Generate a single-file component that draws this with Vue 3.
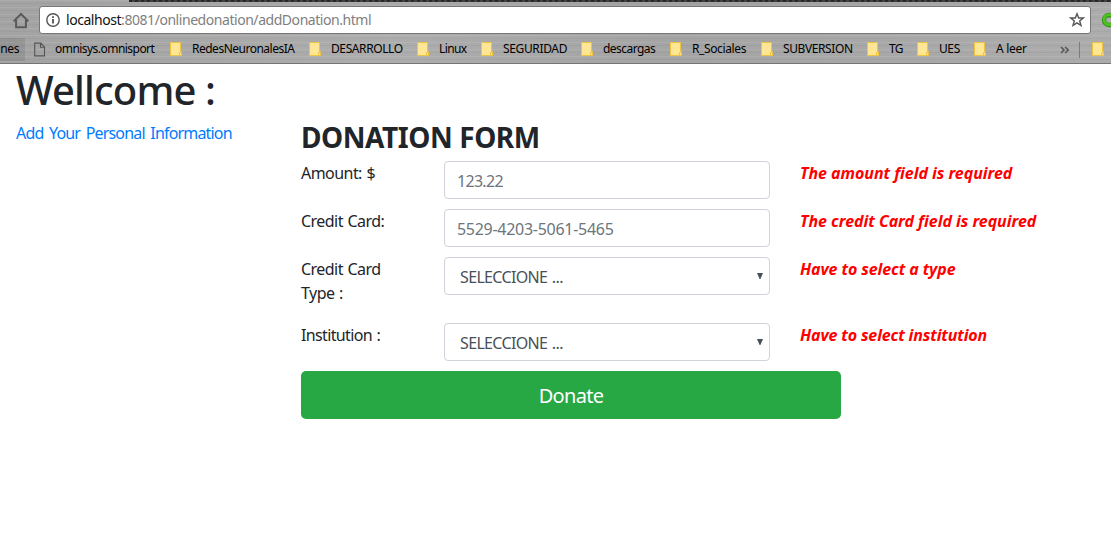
<script setup>
const bookmarks = [
  { label: 'omnisys.omnisport', type: 'file', fit: 'b1' },
  { label: 'RedesNeuronalesIA', type: 'folder', fit: 'b2' },
  { label: 'DESARROLLO', type: 'folder', fit: 'b3' },
  { label: 'Linux', type: 'folder', fit: 'b4' },
  { label: 'SEGURIDAD', type: 'folder', fit: 'b5' },
  { label: 'descargas', type: 'folder', fit: 'b6' },
  { label: 'R_Sociales', type: 'folder', fit: 'b7' },
  { label: 'SUBVERSION', type: 'folder', fit: 'b8' },
  { label: 'TG', type: 'folder', fit: 'b9' },
  { label: 'UES', type: 'folder', fit: 'b10' },
  { label: 'A leer', type: 'folder', fit: 'b11' },
]

const rows = [
  { label: 'Amount: $', value: '123.22', select: false, error: 'The amount field is required' },
  { label: 'Credit Card:', value: '5529-4203-5061-5465', select: false, error: 'The credit Card field is required' },
  { label: 'Credit Card Type :', value: 'SELECCIONE ...', select: true, tall: true, error: 'Have to select a type' },
  { label: 'Institution :', value: 'SELECCIONE ...', select: true, error: 'Have to select institution' },
]
</script>

<template>
  <div class="window">
    <header class="chrome">
      <div class="tabstrip"></div>
      <div class="toolbar">
        <svg class="home" width="18" height="18" viewBox="0 0 18 18">
          <path d="M1.6 9.4 9 2l7.4 7.4M4.1 8v7.2h9.8V8" fill="none" stroke="#5a5a5a" stroke-width="2" />
        </svg>
        <div class="omnibox">
          <svg class="info" width="14" height="14" viewBox="0 0 14 14">
            <circle cx="7" cy="7" r="6.2" fill="none" stroke="#555" stroke-width="1.4" />
            <path d="M7 6v4.6M7 3.3v1.6" stroke="#444" stroke-width="1.7" />
          </svg>
          <span class="url"><span class="host">localhost</span>:8081/onlinedonation/addDonation.html</span>
          <svg class="star" width="16" height="16" viewBox="0 0 16 16">
            <path d="M8 1.8 9.7 6h4.6l-3.6 2.9 1.3 4.6L8 10.9l-4 2.6 1.3-4.6L1.7 6h4.6z" fill="none" stroke="#555" stroke-width="1.4" />
          </svg>
        </div>
        <svg class="extension" width="10" height="16" viewBox="0 0 10 16">
          <circle cx="8" cy="8" r="5" fill="none" stroke="#2c9210" stroke-width="4.4" />
          <circle cx="8" cy="7.6" r="5" fill="none" stroke="#4cc31f" stroke-width="2.8" />
        </svg>
      </div>
      <nav class="bookmarks">
        <span class="clipped"><span>nes</span></span>
        <span v-for="b in bookmarks" :key="b.label" class="bookmark">
          <svg v-if="b.type === 'file'" width="12" height="15" viewBox="0 0 12 15">
            <path d="M.7 1.1h6.2L10.5 5v8.9H.7zM6.5 1v4.2h4" fill="none" stroke="#555" stroke-width="1.1" />
          </svg>
          <svg v-else width="12" height="15" viewBox="0 0 12 15">
            <path d="M.5.5h10v9h1v4H.5z" fill="#ffe694" stroke="#ecc343" />
            <path d="M9.5 13.5v-3h2" fill="none" stroke="#ecc343" />
          </svg>
          <span class="name" :class="b.fit">{{ b.label }}</span>
        </span>
        <svg class="more" width="10" height="8" viewBox="0 0 10 8">
          <path d="m1 1 3 3-3 3M5.2 1l3 3-3 3" fill="none" stroke="#555" stroke-width="1.6" />
        </svg>
        <span class="divider"></span>
        <svg class="last" width="12" height="15" viewBox="0 0 12 15">
          <path d="M.5.5h10v9h1v4H.5z" fill="#ffe694" stroke="#ecc343" />
          <path d="M9.5 13.5v-3h2" fill="none" stroke="#ecc343" />
        </svg>
      </nav>
    </header>

    <main class="page">
      <h1>Wellcome :</h1>
      <div class="columns">
        <aside><a class="link">Add Your Personal Information</a></aside>
        <section class="form">
          <h3>DONATION FORM</h3>
          <div v-for="(r, i) in rows" :key="r.label" class="row" :class="{ tall: r.tall }">
            <label :class="'l' + i">{{ r.label }}</label>
            <div class="control" :class="{ select: r.select }">
              <span :class="'v' + i">{{ r.value }}</span>
              <svg v-if="r.select" class="arrow" width="6" height="6" viewBox="0 0 6 6">
                <path d="M0 0h6L3.4 6h-.8z" fill="#495057" />
              </svg>
            </div>
            <strong class="error"><span :class="'e' + i">{{ r.error }}</span></strong>
          </div>
          <button type="button">Donate</button>
        </section>
      </div>
    </main>
  </div>
</template>

<style>
body { background: #fff; overflow: hidden; }
</style>

<style scoped>
* { box-sizing: border-box; }
.window {
  width: 1111px;
  height: 539px;
  overflow: hidden;
  background: #fff;
  font-family: "Noto Sans", "Open Sans", sans-serif;
  color: #212529;
}
.chrome {
  height: 64px;
  border-bottom: 1px solid #757575;
  background:
    repeating-linear-gradient(180deg, rgba(255,255,255,.09) 0 1px, transparent 1px 3px, rgba(0,0,0,.035) 3px 4px, transparent 4px 7px),
    linear-gradient(90deg, #a3a3a3, #adadad 35%, #a4a4a4 60%, #acacac);
}
.tabstrip {
  height: 2px;
  margin-left: 129px;
  background: repeating-linear-gradient(90deg, #282828 0 3px, #414141 3px 6px);
}
.toolbar { display: flex; height: 36px; padding: 4px 0 0 12px; }
.home { margin-top: 6px; flex: none; }
.omnibox {
  display: flex;
  align-items: center;
  width: 1052px;
  height: 28px;
  margin-left: 9px;
  padding: 0 5px 0 6px;
  border: 1px solid #777;
  border-radius: 3px;
  background: #fff;
  flex: none;
}
.info { flex: none; }
.url { margin-left: 6px; font-size: 14px; line-height: 20px; color: #808080; white-space: nowrap; letter-spacing: -.45px; }
.host { color: #111; }
.star { margin-left: auto; flex: none; }
.extension { margin: 6px 0 0 10px; flex: none; }
.bookmarks {
  display: grid;
  grid-template-columns: 34px 136px 139px 108px 64px 100px 89px 91px 106px 50px 57px 86px 19px 13px 19px;
  align-items: center;
  height: 23px;
  font-size: 12px;
  line-height: 16px;
  color: #000;
}
.clipped {
  display: flex;
  justify-content: flex-end;
  width: 25px;
  height: 23px;
  padding: 3px 6px 0 0;
  overflow: hidden;
  background: rgba(0,0,0,.09);
  letter-spacing: -.4px;
}
.bookmark { display: flex; align-items: center; gap: 10px; white-space: nowrap; }
.bookmark:nth-child(2) { gap: 9px; }
.bookmark svg { flex: none; }
.name { margin-top: -1px; }
.b1 { letter-spacing: -.54px; }
.b2 { letter-spacing: -.5px; }
.b3, .b8 { letter-spacing: -.4px; }
.b4 { letter-spacing: -.6px; }
.b5 { letter-spacing: -.35px; }
.b6 { letter-spacing: -.55px; }
.b7 { letter-spacing: -.38px; }
.b9 { letter-spacing: -.6px; }
.b10 { letter-spacing: -.4px; }
.b11 { letter-spacing: -.3px; }
.divider { width: 1px; height: 16px; background: #7b7b7b; }
.page { padding: 2px 16px 0; }
h1 { margin: 0 0 8px; font-size: 40px; font-weight: 500; line-height: 48px; letter-spacing: -.85px; }
.columns { display: flex; align-items: flex-start; }
aside { width: 285px; flex: none; }
.link { color: #007bff; font-size: 16px; line-height: 22px; display: block; white-space: nowrap; letter-spacing: -.82px; word-spacing: 2.2px; }
.form { flex: 1; }
h3 { margin: 0 0 9px; font-size: 28px; line-height: 30px; font-weight: 700; white-space: nowrap; letter-spacing: -.43px; }
.row {
  display: grid;
  grid-template-columns: 113px 326px 1fr;
  column-gap: 30px;
  height: 48px;
  align-items: start;
  font-size: 16px;
  line-height: 24px;
}
.tall { height: 66px; }
label { display: block; letter-spacing: -.55px; word-spacing: 1px; }
.l3 { letter-spacing: -.64px; }
.control {
  display: flex;
  align-items: center;
  justify-content: space-between;
  height: 38px;
  padding: 1px 12px 0;
  border: 1px solid #ced4da;
  border-radius: 4px;
  color: #6c757d;
}
.v0 { letter-spacing: -.7px; }
.v1 { letter-spacing: -.28px; }
.v2, .v3 { letter-spacing: -.65px; word-spacing: 1px; }
.e2 { letter-spacing: -.1px; }
.e3 { letter-spacing: -.14px; }
.e0, .e1 { letter-spacing: -.04px; }
.select { padding: 2px 6px 0 15px; color: #495057; }
.arrow { margin-top: -3px; }
.error { color: #f00; font-style: italic; font-weight: 700; white-space: nowrap; }
button {
  display: block;
  width: 540px;
  height: 48px;
  padding: 2px 0 0;
  border: 0;
  border-radius: 5px;
  background: #28a745;
  color: #fff;
  font-family: inherit;
  font-size: 20px;
  line-height: 30px;
  letter-spacing: -.7px;
}
</style>
